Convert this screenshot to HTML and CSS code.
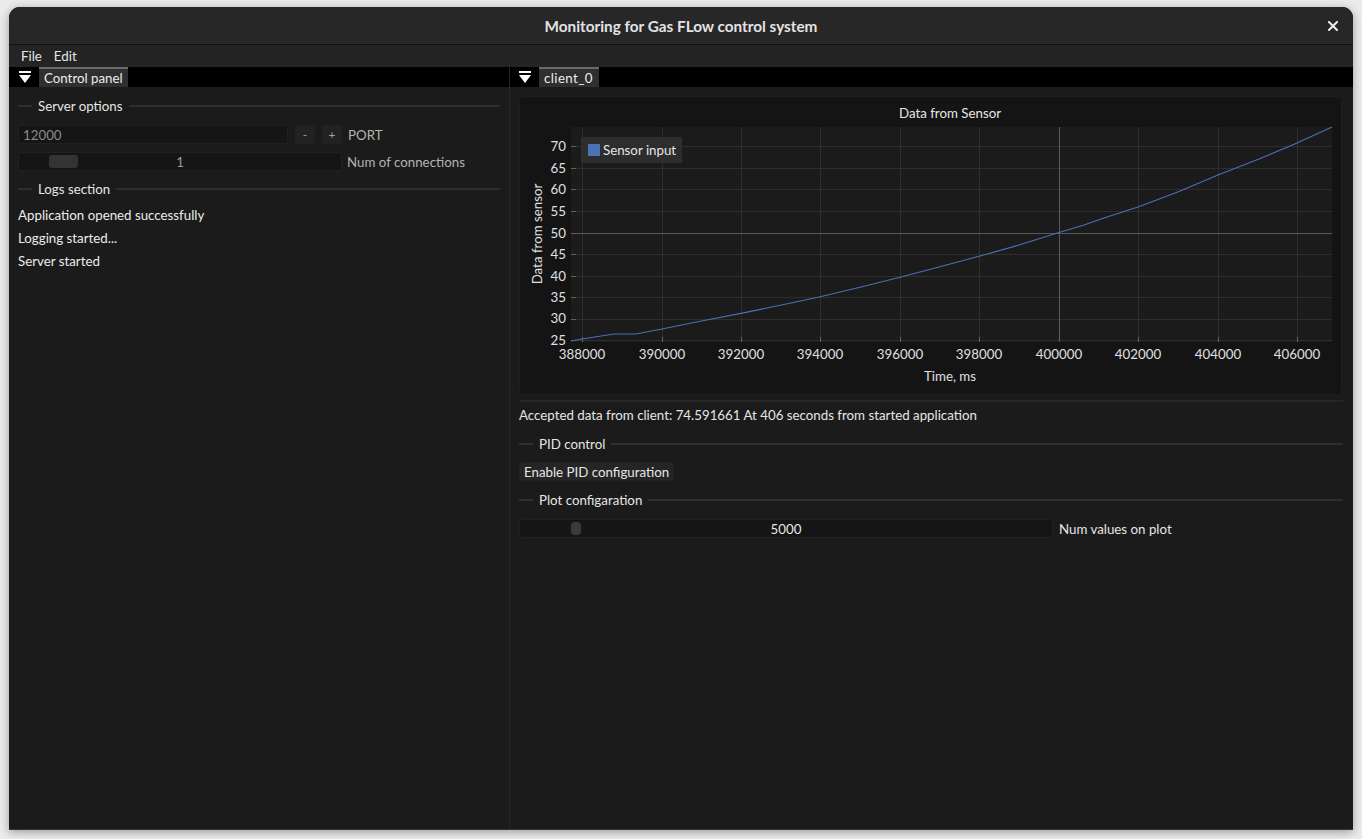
FILE: index.html
```html
<!DOCTYPE html>
<html>
<head>
<meta charset="utf-8">
<title>Monitoring for Gas FLow control system</title>
<link rel="stylesheet" href="styles.css">
</head>
<body>
<div class="window">
  <div class="titlebar">
    <div></div>
    <div class="title">Monitoring for Gas FLow control system</div>
    <div class="close">
      <svg width="10" height="10" viewBox="0 0 10 10"><path d="M1 1 L9 9 M9 1 L1 9" stroke="#eeeeee" stroke-width="2" stroke-linecap="square"/></svg>
    </div>
  </div>
  <div class="menubar">
    <span>File</span>
    <span>Edit</span>
  </div>
  <div class="main">
    <div class="left">
      <div class="tabbar">
        <span class="tri"><svg width="14" height="13" viewBox="0 0 14 13"><rect x="1" y="0" width="12" height="2" fill="#fff"/><path d="M1 4 H13 L7 12 Z" fill="#fff"/></svg></span>
        <span class="tab">Control panel</span>
      </div>
      <div class="content">
        <div class="sep">Server options</div>
        <div class="row r1">
          <div class="input">12000</div>
          <div class="btn">-</div>
          <div class="btn">+</div>
          <div class="label">PORT</div>
        </div>
        <div class="row r2">
          <div class="slider s1"><span class="grab g1"></span>1</div>
          <div class="label">Num of connections</div>
        </div>
        <div class="sep s-logs">Logs section</div>
        <div class="log first">Application opened successfully</div>
        <div class="log">Logging started...</div>
        <div class="log">Server started</div>
      </div>
    </div>
    <div class="right">
      <div class="tabbar tb-right">
        <span class="tri"><svg width="14" height="13" viewBox="0 0 14 13"><rect x="1" y="0" width="12" height="2" fill="#fff"/><path d="M1 4 H13 L7 12 Z" fill="#fff"/></svg></span>
        <span class="tab tab-client">client_0</span>
      </div>
      <div class="content rc">
        <div class="chart">
          <svg width="823" height="299" viewBox="520 96 823 299" font-family="Lato, 'Open Sans', sans-serif" font-size="13.3">
            <rect x="520.5" y="96.5" width="822" height="298" rx="4" fill="#141414" stroke="#1f1f1f"/>
            <text x="951" y="118" text-anchor="middle" fill="#e6e6e6">Data from Sensor</text>
            <rect x="572" y="127" width="761" height="215" fill="#1b1b1b"/>
            <g stroke="#2e2e2e" stroke-width="1">
              <path d="M583.5 127 V342 M663.5 127 V342 M742.5 127 V342 M821.5 127 V342 M901.5 127 V342 M980.5 127 V342 M1139.5 127 V342 M1219.5 127 V342 M1298.5 127 V342"/>
              <path d="M572 146.5 H1333 M572 168.5 H1333 M572 189.5 H1333 M572 211.5 H1333 M572 254.5 H1333 M572 276.5 H1333 M572 297.5 H1333 M572 319.5 H1333 M572 340.5 H1333"/>
            </g>
            <g stroke="#5a5a5a" stroke-width="1">
              <path d="M1060.5 127 V342 M572 233.5 H1333"/>
            </g>
            <g stroke="#606060" stroke-width="1">
              <path d="M572 146.5 h5 M572 168.5 h5 M572 189.5 h5 M572 211.5 h5 M572 233.5 h5 M572 254.5 h5 M572 276.5 h5 M572 297.5 h5 M572 319.5 h5 M572 340.5 h5"/>
              <path d="M583.5 342 v-5 M663.5 342 v-5 M742.5 342 v-5 M821.5 342 v-5 M901.5 342 v-5 M980.5 342 v-5 M1060.5 342 v-10 M1139.5 342 v-5 M1219.5 342 v-5 M1298.5 342 v-5"/>
            </g>
            <g fill="#e0e0e0" text-anchor="end">
              <text x="567" y="151">70</text>
              <text x="567" y="173">65</text>
              <text x="567" y="194">60</text>
              <text x="567" y="216">55</text>
              <text x="567" y="238">50</text>
              <text x="567" y="259">45</text>
              <text x="567" y="281">40</text>
              <text x="567" y="302">35</text>
              <text x="567" y="323">30</text>
              <text x="567" y="345">25</text>
            </g>
            <g fill="#e0e0e0" text-anchor="middle">
              <text x="583" y="359">388000</text>
              <text x="663" y="359">390000</text>
              <text x="742" y="359">392000</text>
              <text x="821" y="359">394000</text>
              <text x="901" y="359">396000</text>
              <text x="980" y="359">398000</text>
              <text x="1060" y="359">400000</text>
              <text x="1139" y="359">402000</text>
              <text x="1219" y="359">404000</text>
              <text x="1298" y="359">406000</text>
              <text x="951" y="381">Time, ms</text>
              <text x="0" y="0" transform="translate(543 234) rotate(-90)">Data from sensor</text>
            </g>
            <polyline fill="none" stroke="#4a71b0" stroke-width="1.2" points="572,341 583,339 615,334 637,334 663,329 700,321.5 742,313.3 780,305.5 818,297.5 860,287.5 900,277.5 940,267 981,256 1020,245 1060,232.5 1085,225 1105,218 1139,207 1180,191.5 1219,175 1260,159 1298,143 1333,127"/>
            <rect x="582" y="137" width="101" height="26" fill="#2d2d2d"/>
            <rect x="589" y="144" width="12" height="12" fill="#4b72b3"/>
            <text x="604" y="155" fill="#e6e6e6">Sensor input</text>
          </svg>
        </div>
        <div class="hr"></div>
        <div class="text-row">Accepted data from client: 74.591661 At 406 seconds from started application</div>
        <div class="sep s-pid">PID control</div>
        <div class="row r-btn"><div class="button">Enable PID configuration</div></div>
        <div class="sep s-plot">Plot configaration</div>
        <div class="row r-sl2">
          <div class="slider s2"><span class="grab g2"></span>5000</div>
          <div class="label white">Num values on plot</div>
        </div>
      </div>
    </div>
  </div>
</div>
</body>
</html>
```

FILE: styles.css
```css
* { box-sizing: border-box; }
html, body { margin: 0; padding: 0; }
body {
  width: 1362px;
  height: 839px;
  overflow: hidden;
  background: #ebebeb;
  font-family: Lato, "Open Sans", sans-serif;
  font-size: 13.3px;
  color: #e6e6e6;
}
.window {
  margin: 7px 0 0 9px;
  width: 1344px;
  height: 823px;
  background: #1b1b1b;
  border-radius: 11px 11px 0 0;
  overflow: hidden;
  box-shadow: 0 2px 10px rgba(0, 0, 0, 0.35);
  display: flex;
  flex-direction: column;
  border-bottom: 1px solid #333;
}
.titlebar {
  height: 38px;
  flex: none;
  display: grid;
  grid-template-columns: 40px 1fr 40px;
  align-items: center;
  background: #272727;
  border-bottom: 1px solid #0f0f0f;
}
.title {
  text-align: center;
  font-weight: 700;
  font-size: 15.3px;
  color: #e3e3e3;
}
.close { display: flex; justify-content: center; align-items: center; }
.close svg { display: block; }
.menubar {
  height: 22px;
  flex: none;
  background: #242424;
  display: flex;
  align-items: center;
  padding-left: 12px;
  gap: 12px;
}
.main { flex: 1; display: flex; min-height: 0; }
.left {
  width: 501px;
  flex: none;
  border-right: 1px solid #262626;
  display: flex;
  flex-direction: column;
}
.right { flex: 1; display: flex; flex-direction: column; }
.tabbar {
  height: 20px;
  flex: none;
  background: #000;
  display: flex;
  align-items: stretch;
  padding-left: 9px;
  gap: 7px;
}
.tb-right { padding-left: 8px; }
.tri { display: flex; align-items: center; }
.tri svg { display: block; }
.tab {
  border-top: 2px solid #6a6a6a;
  background: #2f2f2f;
  padding: 0 5px;
  display: flex;
  align-items: center;
  color: #ececec;
}
.tab-client { padding: 0 6px 0 5px; letter-spacing: 0.4px; }
.content {
  padding: 9px 9px 0 9px;
  display: flex;
  flex-direction: column;
}
.sep {
  display: flex;
  align-items: center;
  gap: 6px;
  height: 19px;
  color: #e6e6e6;
}
.sep::before {
  content: "";
  width: 14px;
  height: 2px;
  background: #2e2e2e;
}
.sep::after {
  content: "";
  flex: 1;
  height: 2px;
  background: #2e2e2e;
}
.row { display: flex; align-items: center; gap: 7px; height: 19px; }
.r1 { margin-top: 10px; }
.r2 { margin-top: 8px; gap: 6px; }
.s-logs { margin-top: 8px; }
.input {
  width: 270px;
  height: 19px;
  background: #151515;
  border: 1px solid #202020;
  border-radius: 3px;
  color: #8a8a8a;
  padding-left: 4px;
  display: flex;
  align-items: center;
}
.btn {
  width: 20px;
  height: 19px;
  background: #222;
  border-radius: 3px;
  display: flex;
  align-items: center;
  justify-content: center;
  color: #a0a0a0;
  font-size: 12px;
}
.label { color: #b4b4b4; margin-left: -1px; }
.label.white { color: #e6e6e6; }
.slider {
  position: relative;
  height: 19px;
  background: #151515;
  border: 1px solid #202020;
  border-radius: 3px;
  display: flex;
  align-items: center;
  justify-content: center;
  color: #9a9a9a;
}
.s1 { width: 324px; }
.s2 { width: 534px; color: #e6e6e6; }
.grab {
  position: absolute;
  top: 2px;
  bottom: 2px;
  background: #333;
  border-radius: 3px;
}
.g1 { left: 30px; width: 29px; }
.g2 { left: 51px; width: 10px; background: #3a3a3a; border-radius: 4px; }
.log { height: 19px; display: flex; align-items: center; margin-top: 4px; color: #ececec; }
.log.first { margin-top: 7px; }
.rc { padding: 9px 10px 0 9px; }
.chart { height: 299px; }
.chart svg { display: block; }
.hr { margin-top: 5px; height: 2px; background: #262626; }
.text-row { margin-top: 3px; height: 19px; display: flex; align-items: center; }
.s-pid { margin-top: 10px; }
.r-btn { margin-top: 9px; }
.button {
  height: 19px;
  padding: 0 4px;
  background: #252525;
  border: 1px solid #222;
  border-radius: 3px;
  display: flex;
  align-items: center;
}
.s-plot { margin-top: 9px; }
.r-sl2 { margin-top: 10px; }
```
